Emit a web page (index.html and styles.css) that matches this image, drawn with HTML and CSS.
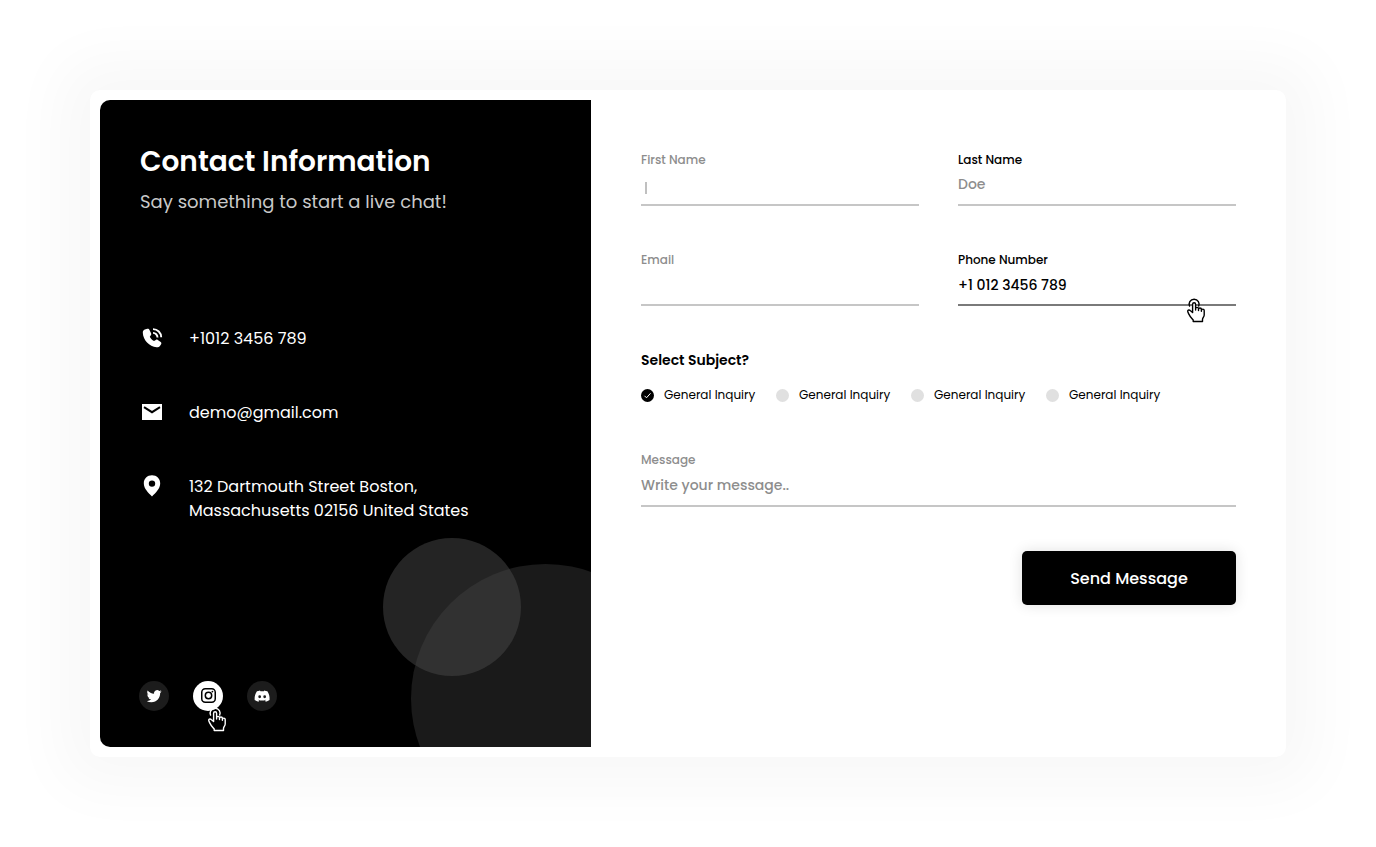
FILE: index.html
```html
<!DOCTYPE html>
<html lang="en">
<head>
<meta charset="utf-8">
<meta name="viewport" content="width=device-width, initial-scale=1">
<title>Contact</title>
<link rel="stylesheet" href="styles.css">
</head>
<body>
<svg class="sprite" aria-hidden="true">
  <symbol id="hand" viewBox="0 0 20 25">
    <path class="hand-ring" d="M3.700 8.600A5 5 0 1 1 12.500 8.600"/>
    <path class="hand-body" d="M6.600 14.500V6.200a1.500 1.500 0 0 1 3 0V12v-1.200a1.400 1.400 0 0 1 2.900 0V12.500v-1a1.400 1.400 0 0 1 2.900 0v1.700-.7a1.400 1.400 0 0 1 2.800 0v4.500c0 1.800-1.700 3-1.700 4.500V23.500H7.200V22c-1.400-1.700-3.100-3.200-4.200-5.600-.8-1.600-1.500-2.700-1.300-3.500.3-1.100 1.700-1.200 2.500-.4z"/>
  </symbol>
</svg>
<main class="card">
  <section class="info">
    <h1 class="info-title">Contact Information</h1>
    <p class="info-subtitle">Say something to start a live chat!</p>
    <ul class="contacts">
      <li class="contact">
        <svg class="contact-icon" viewBox="0 0 24 24" aria-hidden="true"><path fill="currentColor" d="M7.300 2.800 4.800 3.600C3.500 4 2.800 5.200 2.800 6.700 3.100 14 9.300 20.700 16.500 21.200c1.500.1 2.800-.4 3.600-1.500l1-1.500c.5-.8.3-1.600-.4-2.100l-2.900-2.100c-.6-.5-1.400-.5-2-.1l-1.800 1.200c-1.900-1-3.300-2.500-4.200-4.300l1.200-1.700c.4-.6.400-1.200.1-1.900L9.500 4c-.4-1-1.200-1.500-2.200-1.200z"/><path fill="none" stroke="currentColor" stroke-width="1.900" d="M13 3.100a8.200 8.200 0 0 1 8.200 8.200M13 6.900a4.500 4.500 0 0 1 4.500 4.500"/></svg>
        <span class="contact-text">+1012 3456 789</span>
      </li>
      <li class="contact">
        <svg class="contact-icon" viewBox="0 0 24 24" aria-hidden="true"><path fill="currentColor" d="M2 4h20v16H2z"/><path class="flap" d="m4 7.200 8 5 8-5"/></svg>
        <span class="contact-text">demo@gmail.com</span>
      </li>
      <li class="contact">
        <svg class="contact-icon" viewBox="0 0 24 24" aria-hidden="true"><path fill="currentColor" fill-rule="evenodd" d="M12 1.200c-4.700 0-8.200 3.500-8.200 8 0 5.700 4.700 9.500 8.200 13.300 3.500-3.800 8.200-7.600 8.200-13.300 0-4.500-3.500-8-8.200-8zm0 5.200a3.200 3.200 0 1 1 0 6.400 3.200 3.200 0 0 1 0-6.400z"/></svg>
        <span class="contact-text">132 Dartmouth Street Boston,<br>Massachusetts 02156 United States</span>
      </li>
    </ul>
    <nav class="socials" aria-label="Social media">
      <a class="social" href="#twitter" aria-label="Twitter"><svg width="16" height="16" viewBox="-1 -1 25.500 25.500"><path fill="currentColor" d="M23.950 4.570a10 10 0 0 1-2.820.780 4.960 4.960 0 0 0 2.160-2.730c-.95.560-2 .960-3.130 1.190a4.920 4.920 0 0 0-8.380 4.480C7.690 8.090 4.070 6.130 1.640 3.160a4.820 4.820 0 0 0-.67 2.480c0 1.710.87 3.210 2.190 4.100a4.900 4.900 0 0 1-2.230-.62v.06a4.920 4.920 0 0 0 3.950 4.830 5 5 0 0 1-2.210.08 4.940 4.940 0 0 0 4.600 3.420A9.870 9.870 0 0 1 0 19.540a13.990 13.990 0 0 0 7.550 2.210c9.050 0 14-7.500 14-13.980 0-.21 0-.42-.02-.63a9.940 9.940 0 0 0 2.460-2.550z"/></svg></a>
      <a class="social social-active" href="#instagram" aria-label="Instagram"><svg width="16" height="16" viewBox="0 0 16 16" fill="none" stroke="currentColor" stroke-width="1.500"><rect x="1.750" y=".75" width="13.500" height="13.500" rx="3.500"/><circle cx="8.500" cy="7.500" r="3.200"/><circle cx="12.400" cy="3.600" r=".9" fill="currentColor" stroke="none"/></svg><svg class="hand hand-light" aria-hidden="true"><use href="#hand"/></svg></a>
      <a class="social" href="#discord" aria-label="Discord"><svg width="16" height="16" viewBox="-1 -1 25.500 25.500"><path fill="currentColor" fill-rule="evenodd" d="M20.320 4.370A19.800 19.800 0 0 0 15.430 2.850l-.7 1.350a18.300 18.300 0 0 0-5.470 0L8.560 2.850a19.700 19.700 0 0 0-4.880 1.520C.53 9.050-.32 13.580.1 18.060a19.900 19.900 0 0 0 5.990 3.030l1.300-2.100-1.900-.95.400-.3c3.900 1.800 8.200 1.800 12.100 0l.4.300-1.900.95 1.300 2.100a19.800 19.800 0 0 0 6-3.030c.5-5.180-.84-9.670-3.470-13.690zM8.020 15.330a2.300 2.300 0 0 1-2.150-2.420 2.160 2.160 0 1 1 4.310 0 2.300 2.300 0 0 1-2.160 2.420zm7.970 0a2.300 2.300 0 0 1-2.150-2.420 2.160 2.160 0 1 1 4.310 0 2.300 2.300 0 0 1-2.160 2.420z"/></svg></a>
    </nav>
  </section>
  <form class="form">
    <div class="fields">
      <div class="field">
        <label class="label" for="first">First Name</label>
        <input class="input" id="first" type="text">
        <span class="caret" aria-hidden="true"></span>
      </div>
      <div class="field">
        <label class="label label-dark" for="last">Last Name</label>
        <input class="input" id="last" type="text" placeholder="Doe">
      </div>
      <div class="field">
        <label class="label" for="email">Email</label>
        <input class="input" id="email" type="email">
      </div>
      <div class="field">
        <label class="label label-dark" for="phone">Phone Number</label>
        <input class="input input-active" id="phone" type="tel" value="+1 012 3456 789">
        <svg class="hand hand-dark" aria-hidden="true"><use href="#hand"/></svg>
      </div>
    </div>
    <fieldset class="subjects">
      <legend class="subjects-title">Select Subject?</legend>
      <div class="options">
        <label class="option"><span class="mark"><input class="radio" type="radio" name="subject" checked><svg class="tick" viewBox="0 0 13 13" aria-hidden="true"><path d="m3.500 6.800 2 2 4-4.500"/></svg></span>General Inquiry</label>
        <label class="option"><input class="radio" type="radio" name="subject">General Inquiry</label>
        <label class="option"><input class="radio" type="radio" name="subject">General Inquiry</label>
        <label class="option"><input class="radio" type="radio" name="subject">General Inquiry</label>
      </div>
    </fieldset>
    <div class="field">
      <label class="label" for="message">Message</label>
      <input class="input input-message" id="message" type="text" placeholder="Write your message..">
    </div>
    <button class="send" type="button">Send Message</button>
  </form>
</main>
</body>
</html>
```
FILE: styles.css
```css
* {
  box-sizing: border-box;
}

body {
  margin: 0;
  padding: 90px;
  background: #fff;
  color: #000;
  font-family: Poppins, Inter, sans-serif;
}

.sprite {
  position: absolute;
  width: 0;
  height: 0;
}

.card {
  display: flex;
  padding: 10px;
  border-radius: 10px;
  background: #fff;
  box-shadow: 0 0 60px 30px rgba(0, 0, 0, 0.03);
}

.info {
  position: relative;
  z-index: 0;
  flex: 0 1 491px;
  overflow: hidden;
  padding: 40px 40px 36px;
  border-radius: 10px 0 0 10px;
  background: #000;
  color: #fff;
}

.info::before,
.info::after {
  content: "";
  position: absolute;
  z-index: -1;
  border-radius: 50%;
}

.info::before {
  right: -89px;
  bottom: -86px;
  width: 269px;
  height: 269px;
  background: #1a1a1a;
}

.info::after {
  right: 70px;
  bottom: 71px;
  width: 138px;
  height: 138px;
  background: rgba(72, 72, 72, 0.5);
}

.info-title {
  margin: 0 0 4px;
  font-size: 28px;
  font-weight: 600;
  line-height: 44px;
}

.info-subtitle {
  margin: 0;
  color: #c9c9c9;
  font-size: 18px;
  line-height: 27px;
}

.contacts {
  display: flex;
  flex-direction: column;
  gap: 49px;
  margin: 111px 0 0;
  padding: 0;
  list-style: none;
}

.contact {
  display: flex;
  gap: 25px;
  font-size: 16px;
  line-height: 24px;
}

.contact-text {
  padding-top: 1px;
}

.contact-icon {
  flex: none;
  width: 24px;
  height: 24px;
}

.flap {
  fill: none;
  stroke: #000;
  stroke-width: 2;
}

.socials {
  display: flex;
  gap: 24px;
  margin: 158px 0 0 -1px;
}

.social {
  position: relative;
  display: flex;
  align-items: center;
  justify-content: center;
  width: 30px;
  height: 30px;
  border-radius: 50%;
  background: #1c1c1c;
  color: #fff;
}

.social-active {
  background: #fff;
  color: #000;
}

.hand {
  position: absolute;
  width: 20px;
  height: 25px;
  stroke-width: 1.4;
  stroke-linejoin: round;
}

.hand-ring {
  fill: none;
}

.hand-light {
  top: 26px;
  left: 14px;
  fill: #000;
  stroke: #fff;
}

.hand-dark {
  top: 48px;
  right: 30px;
  fill: #fff;
  stroke: #000;
}

.form {
  display: flex;
  flex: 1;
  flex-direction: column;
  min-width: 0;
  padding: 50px 40px 50px 50px;
}

.fields {
  display: grid;
  grid-template-columns: 1fr 1fr;
  gap: 44px 39px;
}

.field {
  position: relative;
  display: flex;
  flex-direction: column;
}

.label {
  color: #8d8d8d;
  font-size: 12px;
  font-weight: 500;
  line-height: 20px;
}

.label-dark {
  color: #000;
}

.input {
  width: 100%;
  height: 36px;
  padding: 0 0 5px;
  border: 0;
  border-bottom: 2px solid #c6c6c6;
  border-radius: 0;
  outline: 0;
  background: transparent;
  color: #000;
  font: 500 14px Poppins, Inter, sans-serif;
}

.input::placeholder {
  color: #8d8d8d;
  opacity: 1;
}

.input-active {
  padding-bottom: 3px;
  border-color: #7a7a7a;
}

.input-message {
  height: 37px;
  padding-bottom: 4px;
}

.caret {
  position: absolute;
  top: 32px;
  left: 4px;
  width: 2px;
  height: 12px;
  background: #c0c0c0;
}

.subjects {
  margin: 44px 0;
  padding: 0;
  border: 0;
}

.subjects-title {
  padding: 0;
  font-size: 14px;
  font-weight: 600;
  line-height: 20px;
}

.options {
  display: grid;
  grid-template-columns: repeat(auto-fill, 135px);
  row-gap: 12px;
  padding: 15px 0 1px;
}

.option {
  display: flex;
  align-items: center;
  gap: 10px;
  font-size: 12px;
  line-height: 20px;
}

.mark {
  position: relative;
  display: flex;
}

.radio {
  appearance: none;
  width: 13px;
  height: 13px;
  margin: 0;
  border-radius: 50%;
  background: #e0e0e0;
}

.radio:checked {
  background: #000;
}

.tick {
  position: absolute;
  inset: 0;
  fill: none;
  stroke: #fff;
}

.send {
  align-self: flex-end;
  min-width: 214px;
  margin-top: 44px;
  padding: 16px 48px 14px;
  border: 0;
  border-radius: 5px;
  background: #000;
  box-shadow: 0 0 14px rgba(0, 0, 0, 0.12);
  color: #fff;
  font: 500 16px/24px Poppins, Inter, sans-serif;
}
```
